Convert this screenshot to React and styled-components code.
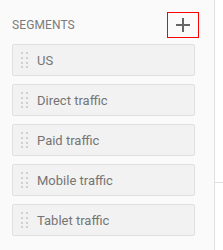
import React from 'react';
import styled, { createGlobalStyle } from 'styled-components';

const GlobalStyle = createGlobalStyle`
    html, body {
        margin: 0;
        padding: 0;
        background: #fff;
        font-family: Roboto, "Liberation Sans", sans-serif;
    }
`;

// Whole page: sidebar + content
const Layout = styled.div`
    display: flex;
    height: 250px;
    overflow: hidden;
`;

const Sidebar = styled.aside`
    width: 215px;
    box-sizing: border-box;
    padding: 12px 19px 0 12px;
    background-color: #fafafa;
    border-right: 1px solid #e0e0e0;
`;

const Header = styled.div`
    display: flex;
    align-items: center;
    justify-content: space-between;
    height: 26px;
    margin-right: -4px;
`;

const Title = styled.span`
    display: block;
    padding-top: 1px;
    font-size: 12px;
    line-height: 15px;
    font-weight: 400;
    color: #7a7a7a;
    text-transform: uppercase;
    letter-spacing: 0.1px;
`;

const AddButton = styled.button`
    width: 32px;
    height: 26px;
    box-sizing: border-box;
    padding: 0;
    display: flex;
    align-items: center;
    justify-content: center;
    background: transparent;
    border: 1px solid #ff0000;
    cursor: pointer;
`;

const SegmentList = styled.ul`
    list-style: none;
    margin: 6px 0 0;
    padding: 0;
    display: flex;
    flex-direction: column;
    gap: 8px;
`;

const Segment = styled.li`
    height: 32px;
    box-sizing: border-box;
    display: flex;
    align-items: center;
    gap: 9px;
    padding-left: 8px;
    background-color: #f2f2f2;
    border: 1px solid #e0e0e0;
    border-radius: 2px;
    font-size: 13px;
    color: #757575;
    cursor: grab;
`;

const Content = styled.main`
    flex: 1;
    background: #fff;
`;

const Divider = styled.div`
    margin-top: 182px;
    border-top: 1px solid #e0e0e0;
`;

const DragHandle = () => (
    <svg width="7" height="16" viewBox="0 0 7 16" fill="#d0d0d0">
        {[0, 5, 10, 14].map((y) => (
            <React.Fragment key={y}>
                <rect x="0" y={y} width="2" height="2" />
                <rect x="5" y={y} width="2" height="2" />
            </React.Fragment>
        ))}
    </svg>
);

const PlusIcon = () => (
    <svg width="16" height="16" viewBox="0 0 16 16">
        <path d="M1 8h14M8 1v14" stroke="#666" strokeWidth="2" />
    </svg>
);

const segments = ['US', 'Direct traffic', 'Paid traffic', 'Mobile traffic', 'Tablet traffic'];

export default function App() {
    return (
        <Layout>
            <GlobalStyle />
            <Sidebar>
                <Header>
                    <Title>Segments</Title>
                    <AddButton aria-label="Add segment">
                        <PlusIcon />
                    </AddButton>
                </Header>
                <SegmentList>
                    {segments.map((name) => (
                        <Segment key={name}>
                            <DragHandle />
                            {name}
                        </Segment>
                    ))}
                </SegmentList>
            </Sidebar>
            <Content>
                <Divider />
            </Content>
        </Layout>
    );
}
